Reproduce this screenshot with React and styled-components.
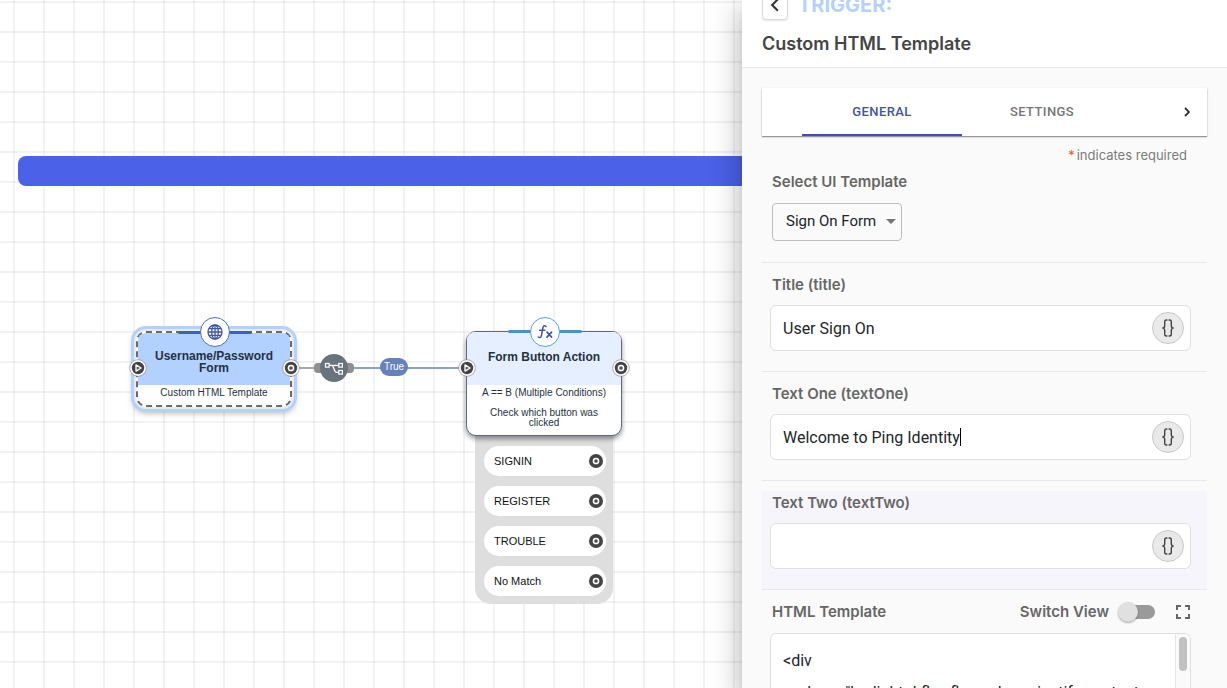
import React from "react";
import styled, { createGlobalStyle, css } from "styled-components";

const GlobalStyle = createGlobalStyle`
  *, *::before, *::after { box-sizing: border-box; }
  html, body { margin: 0; height: 100%; overflow: hidden; }
  body { font-family: Inter, "Liberation Sans", sans-serif; font-size: 15px; color: #212529; background: #fff; }
  button, input, select, textarea { font: inherit; color: inherit; margin: 0; }
  h2, p { margin: 0; }
`;

const Page = styled.div`
  display: flex;
  height: 100vh;
  overflow: hidden;
`;

/* ---------- flow canvas ---------- */

const Canvas = styled.main`
  position: relative;
  flex: 1;
  min-width: 0;
  overflow: hidden;
  background-color: #fff;
  background-image:
    linear-gradient(rgba(0, 0, 0, 0.05) 2px, transparent 2px),
    linear-gradient(90deg, rgba(0, 0, 0, 0.05) 2px, transparent 2px);
  background-size: 30px 30px;
  background-position: 0 1px, 13px 0;
  font-family: "Liberation Sans", Arial, sans-serif;
`;

const Banner = styled.div`
  position: absolute;
  left: 18px;
  right: -20px;
  top: 156px;
  height: 30px;
  border-radius: 8px;
  background: #4a61e8;
`;

const Placed = styled.div`
  position: absolute;
  left: ${(p) => p.$x}px;
  top: ${(p) => p.$y}px;
`;

const Card = styled.article`
  position: relative;
  width: 156px;
  border-radius: 10px;
  background: #fff;
  border: 1px solid #5a6a80;
  color: #253140;
  box-shadow: 0 3px 5px rgba(0, 0, 0, 0.4);
  ${(p) =>
    p.$selected &&
    css`
      border: 2px dashed #6b6b6b;
      box-shadow: 0 0 0 2px #e9eaec, 0 0 0 5px #b3d1ff, 0 3px 6px 3px rgba(0, 0, 0, 0.3);
    `}
`;

const CardHead = styled.header`
  display: flex;
  align-items: center;
  justify-content: center;
  height: ${(p) => (p.$selected ? 52 : 53)}px;
  padding: ${(p) => (p.$selected ? "6px 8px 0" : "0 8px 4px")};
  border-radius: 8px 8px 0 0;
  background: ${(p) => (p.$selected ? "#b3d1ff" : "#e5efff")};
  font-size: 12px;
  line-height: 12px;
  font-weight: 700;
  text-align: center;
`;

const CardBody = styled.div`
  display: flex;
  flex-direction: column;
  gap: 10px;
  padding: 3px 12px 7px;
  font-size: 10px;
  line-height: 10px;
  text-align: center;
`;

const Accent = styled.span`
  position: absolute;
  left: 50%;
  top: -2px;
  width: 74px;
  height: 3px;
  margin-left: -36px;
  border-radius: 2px;
  background: ${(p) => p.$color};
`;

const Badge = styled.span`
  position: absolute;
  left: 50%;
  top: ${(p) => (p.$selected ? -16 : -15)}px;
  width: 30px;
  height: 30px;
  margin-left: -14px;
  display: grid;
  place-items: center;
  border: 1px solid ${(p) => p.$color};
  border-radius: 50%;
  background: #fff;
`;

const Choices = styled.ul`
  display: flex;
  flex-direction: column;
  gap: 10px;
  width: 138px;
  margin: 0;
  padding: 16px 7px 8px 9px;
  list-style: none;
  border-radius: 0 0 16px 16px;
  background: #dedede;
`;

const Choice = styled.li`
  display: flex;
  align-items: center;
  justify-content: space-between;
  height: 30px;
  padding: 0 1px 0 10px;
  border-radius: 15px;
  background: #fff;
  color: #111;
  font-size: 11px;
`;

const EdgeLabel = styled.span`
  display: block;
  width: 28px;
  border-radius: 9px;
  background: #6781bb;
  color: #fff;
  font-size: 10px;
  line-height: 18px;
  text-align: center;
`;

/* ---------- side panel ---------- */

const Panel = styled.aside`
  position: relative;
  z-index: 1;
  display: flex;
  flex-direction: column;
  width: 485px;
  flex: none;
  background: #fafafa;
  box-shadow: 0 8px 10px -5px rgba(0, 0, 0, 0.2), 0 16px 24px 2px rgba(0, 0, 0, 0.14), 0 6px 30px 5px rgba(0, 0, 0, 0.12);
`;

const PanelHead = styled.header`
  display: flex;
  flex-direction: column;
  justify-content: flex-end;
  gap: 12px;
  flex: none;
  height: 68px;
  padding: 0 20px 11px;
  overflow: hidden;
  border-bottom: 1px solid #e8e8e8;
  background: #fff;
`;

const Crumb = styled.div`
  display: flex;
  align-items: center;
  gap: 10px;
  color: #b3d1ff;
  font-size: 20px;
  line-height: 30px;
  font-weight: 700;
`;

const BackButton = styled.button`
  display: grid;
  place-items: center;
  width: 26px;
  height: 30px;
  padding: 0;
  border: 1px solid #d8d8e4;
  border-radius: 4px;
  background: #fff;
  box-shadow: 0 1px 2px rgba(0, 0, 0, 0.1);
`;

const PanelTitle = styled.h2`
  color: #454545;
  font-size: 18px;
  line-height: 24px;
  font-weight: 600;
`;

const PanelBody = styled.div`
  display: flex;
  flex-direction: column;
  flex: 1;
  min-height: 0;
  padding: 20px 20px 0;
  overflow: hidden;
`;

const TabBar = styled.div`
  display: flex;
  flex: none;
  height: 48px;
  padding-left: 40px;
  background: #fff;
  box-shadow: 0 1px 1px rgba(0, 0, 0, 0.35), 0 1px 3px rgba(0, 0, 0, 0.12);
`;

const TabList = styled.div`
  display: flex;
  flex: 1;
  min-width: 0;
  overflow: hidden;
`;

const Tab = styled.button`
  flex: none;
  width: 160px;
  padding: 0;
  border: 0;
  border-bottom: 2px solid ${(p) => (p.$active ? "#3f51b5" : "transparent")};
  background: none;
  color: ${(p) => (p.$active ? "#3f51b5" : "#757575")};
  font-family: Roboto, sans-serif;
  font-size: 13px;
  font-weight: 500;
  letter-spacing: 0.4px;
`;

const IconButton = styled.button`
  display: grid;
  place-items: center;
  width: ${(p) => p.$w || 40}px;
  padding: 0;
  border: 0;
  background: none;
`;

const RequiredNote = styled.p`
  padding: 9px 20px 0 0;
  color: #7c7c7c;
  font-size: 13px;
  line-height: 20px;
  text-align: right;
  span { margin-right: 2px; color: #f4511e; }
`;

const Section = styled.section`
  flex: none;
  display: flex;
  flex-direction: column;
  gap: ${(p) => (p.$first ? 9 : 8)}px;
  margin-top: ${(p) => (p.$first ? 5 : 10)}px;
  padding: 0 16px ${(p) => (p.$first ? 21 : 20)}px 8px;
  border-bottom: 1px solid #e8e8ee;
  background: ${(p) => (p.$tinted ? "#f6f5fb" : "transparent")};
`;

const Label = styled.label`
  padding-left: 2px;
  color: #666;
  font-size: 15px;
  line-height: 24px;
  font-weight: 600;
`;

const SelectBox = styled.div`
  position: relative;
  width: 130px;
  margin-left: 2px;
  svg { position: absolute; right: 6px; top: 16px; pointer-events: none; }
`;

const Select = styled.select`
  appearance: none;
  width: 100%;
  height: 38px;
  padding: 0 20px 2px 13px;
  border: 1px solid #bdbdbd;
  border-radius: 4px;
  background: transparent;
  font-family: Roboto, sans-serif;
`;

const Field = styled.div`
  display: flex;
  align-items: center;
  height: 46px;
  padding: 0 6px 0 12px;
  border: 1px solid #dfdfe4;
  border-radius: 6px;
  background: #fff;
`;

const Input = styled.input`
  field-sizing: content;
  min-width: 10px;
  padding: 0;
  border: 0;
  outline: 0;
  background: none;
  font-family: Roboto, sans-serif;
  font-size: 16px;
`;

const Caret = styled.span`
  width: 1px;
  height: 18px;
  background: #000;
`;

const VariableButton = styled.button`
  display: grid;
  place-items: center;
  width: 32px;
  height: 32px;
  margin-left: auto;
  padding: 0;
  border: 1px solid #cfc6c9;
  border-radius: 50%;
  background: #e9e9e9;
`;

const TemplateSection = styled.section`
  display: flex;
  flex-direction: column;
  flex: 1;
  min-height: 0;
  margin-top: 10px;
  padding: 0 16px 0 8px;
`;

const TemplateHead = styled.div`
  display: flex;
  align-items: center;
  margin-bottom: 9px;
`;

const SwitchLabel = styled(Label)`
  display: flex;
  align-items: center;
  gap: 9px;
  margin-left: auto;
  margin-right: 20px;
`;

const Switch = styled.input`
  appearance: none;
  position: relative;
  width: 37px;
  height: 20px;
  &::before {
    content: "";
    position: absolute;
    inset: 3px 0 3px 3px;
    border-radius: 7px;
    background: #9a9a9a;
  }
  &::after {
    content: "";
    position: absolute;
    left: 0;
    top: 0;
    width: 20px;
    height: 20px;
    border-radius: 50%;
    background: #e0e0e0;
    box-shadow: 0 1px 2px rgba(0, 0, 0, 0.35);
  }
`;

const Editor = styled.div`
  display: flex;
  flex: 1;
  min-height: 0;
  border: 1px solid #dfdfe2;
  border-bottom: 0;
  border-radius: 6px 6px 0 0;
  background: #fff;
  overflow: hidden;
`;

const Code = styled.textarea`
  flex: 1;
  min-width: 0;
  padding: 11px 12px;
  border: 0;
  outline: 0;
  resize: none;
  overflow: hidden;
  background: none;
  font-family: Roboto, sans-serif;
  font-size: 16px;
  line-height: 32px;
  white-space: pre;
`;

const ScrollTrack = styled.div`
  width: 15px;
  padding: 3px 3px 0;
  border-left: 1px solid #e6e6e6;
  background: #fafafa;
`;

const ScrollThumb = styled.div`
  height: 34px;
  width: 8px;
  border-radius: 4px;
  background: #c1c1c1;
`;

/* ---------- drawings ---------- */

function OutPort({ ring }) {
  return (
    <svg width="18" height="18" viewBox="0 0 18 18" aria-hidden="true" display="block">
      {ring && <circle cx="9" cy="9" r="8.3" fill="#fff" stroke="#777" strokeWidth="0.6" />}
      <circle cx="9" cy="9" r={ring ? 6.2 : 7} fill="#444" />
      <circle cx="9" cy="9" r="2.6" fill="#555" stroke="#fff" strokeWidth="1.5" />
    </svg>
  );
}

function InPort() {
  return (
    <svg width="18" height="18" viewBox="0 0 18 18" aria-hidden="true" display="block">
      <circle cx="9" cy="9" r="8.3" fill="#fff" stroke="#777" strokeWidth="0.6" />
      <circle cx="9" cy="9" r="6.2" fill="#444" />
      <path d="M7 5.9v6.2L12.1 9z" fill="#555" stroke="#fff" strokeWidth="1.3" strokeLinejoin="round" />
    </svg>
  );
}

function Globe() {
  return (
    <svg width="16" height="16" viewBox="0 0 16 16" fill="none" stroke="#3f57a6" strokeWidth="1.3" aria-hidden="true">
      <circle cx="8" cy="8" r="7" />
      <ellipse cx="8" cy="8" rx="3.3" ry="7" />
      <path d="M8 1v14M1 8h14M2 4.7h12M2 11.3h12" />
    </svg>
  );
}

function Fx() {
  return (
    <svg width="18" height="18" viewBox="0 0 18 18" fill="none" stroke="#3f57a6" strokeWidth="1.5" strokeLinecap="round" aria-hidden="true">
      <path d="M10 3.6C8.8 2.2 7.3 2.6 7 4.3L5.4 12.6c-.3 1.9-1.8 2.4-3.2 1.4M3.6 7.2h5.2" />
      <path d="M11 9.2l4.6 5M15.6 9.2l-4.6 5" strokeWidth="1.7" />
    </svg>
  );
}

function Connector() {
  return (
    <svg width="170" height="30" viewBox="0 0 170 30" aria-hidden="true" display="block">
      <path d="M0 15h18" stroke="#a8a8a8" strokeWidth="2" />
      <path d="M50 15h111" stroke="#86a1d2" strokeWidth="2" />
      <rect x="16" y="10" width="40" height="10" rx="4" fill="#8f8f8f" />
      <circle cx="36" cy="15" r="14" fill="#69737e" />
      <g fill="none" stroke="#fff" strokeWidth="1.2">
        <rect x="27.5" y="10.5" width="3.6" height="3.6" />
        <rect x="40.8" y="10.5" width="3.6" height="3.6" />
        <rect x="40.8" y="17.5" width="3.6" height="3.6" />
        <path d="M31 12.3h9.8M33.6 12.3c2.8 0 2 7 5 7h2.2" />
      </g>
    </svg>
  );
}

function Chevron({ left, size = 14 }) {
  return (
    <svg width={size} height={size} viewBox="0 0 14 14" fill="none" stroke="#333" strokeWidth="1.8" aria-hidden="true">
      <path d={left ? "M9.5 2 4.5 7l5 5" : "M5 3l4 4-4 4"} />
    </svg>
  );
}

function Braces() {
  return (
    <svg width="14" height="18" viewBox="0 0 14 18" fill="none" stroke="#444" strokeWidth="1.4" aria-hidden="true">
      <path d="M6.4 1H5.5C4.1 1 3.7 1.8 3.7 3v3.4C3.7 8 3.1 9 1.4 9c1.7 0 2.300 1 2.300 2.600V15c0 1.200.4 2 1.800 2h.9M7.600 1h.9c1.400 0 1.800.8 1.800 2v3.400c0 1.600.6 2.600 2.300 2.600-1.700 0-2.300 1-2.300 2.600V15c0 1.200-.4 2-1.800 2h-.9" />
    </svg>
  );
}

function Expand() {
  return (
    <svg width="14" height="14" viewBox="0 0 14 14" fill="none" stroke="#666" strokeWidth="2" aria-hidden="true">
      <path d="M1 5V1h4M9 1h4v4M13 9v4H9M5 13H1V9" />
    </svg>
  );
}

function TextSection({ id, label, value, tinted, caret }) {
  return (
    <Section $tinted={tinted}>
      <Label htmlFor={id}>{label}</Label>
      <Field>
        <Input id={id} type="text" defaultValue={value} />
        {caret && <Caret />}
        <VariableButton type="button" aria-label="Insert variable"><Braces /></VariableButton>
      </Field>
    </Section>
  );
}

const TEMPLATE = `<div
    class="bg-light d-flex flex-column justify-content-
center align-items-center">`;

export default function App() {
  return (
    <>
      <GlobalStyle />
      <Page>
        <Canvas>
          <Banner />
          <Placed $x={298} $y={353}><Connector /></Placed>
          <Placed $x={380} $y={358}><EdgeLabel>True</EdgeLabel></Placed>

          <Placed $x={136} $y={331}>
            <Card $selected>
              <CardHead $selected>Username/Password Form</CardHead>
              <CardBody>
                <p>Custom HTML Template</p>
              </CardBody>
              <Accent $color="#3d62b0" />
              <Badge $selected $color="#4a6cb8"><Globe /></Badge>
            </Card>
          </Placed>
          <Placed $x={129} $y={359}><InPort /></Placed>
          <Placed $x={282} $y={359}><OutPort ring /></Placed>

          <Placed $x={475} $y={430}>
            <Choices>
              {["SIGNIN", "REGISTER", "TROUBLE", "No Match"].map((name) => (
                <Choice key={name}>{name}<OutPort /></Choice>
              ))}
            </Choices>
          </Placed>
          <Placed $x={466} $y={331}>
            <Card>
              <CardHead>Form Button Action</CardHead>
              <CardBody>
                <p>A == B (Multiple Conditions)</p>
                <p>Check which button was clicked</p>
              </CardBody>
              <Accent $color="#4a90cf" />
              <Badge $color="#5a9fd6"><Fx /></Badge>
            </Card>
          </Placed>
          <Placed $x={458} $y={359}><InPort /></Placed>
          <Placed $x={612} $y={359}><OutPort ring /></Placed>
        </Canvas>

        <Panel>
          <PanelHead>
            <Crumb>
              <BackButton type="button" aria-label="Back"><Chevron left size={16} /></BackButton>
              TRIGGER:
            </Crumb>
            <PanelTitle>Custom HTML Template</PanelTitle>
          </PanelHead>
          <PanelBody>
            <TabBar>
              <TabList role="tablist">
                <Tab type="button" role="tab" aria-selected="true" $active>GENERAL</Tab>
                <Tab type="button" role="tab" aria-selected="false">SETTINGS</Tab>
              </TabList>
              <IconButton type="button" aria-label="Next tabs"><Chevron /></IconButton>
            </TabBar>
            <RequiredNote><span>*</span>indicates required</RequiredNote>

            <Section $first>
              <Label htmlFor="ui-template">Select UI Template</Label>
              <SelectBox>
                <Select id="ui-template" defaultValue="Sign On Form">
                  <option>Sign On Form</option>
                </Select>
                <svg width="10" height="5" viewBox="0 0 10 5" aria-hidden="true"><path d="M0 0h10L5 5z" fill="#757575" /></svg>
              </SelectBox>
            </Section>
            <TextSection id="title" label="Title (title)" value="User Sign On" />
            <TextSection id="text-one" label="Text One (textOne)" value="Welcome to Ping Identity" caret />
            <TextSection id="text-two" label="Text Two (textTwo)" value="" tinted />

            <TemplateSection>
              <TemplateHead>
                <Label htmlFor="html-template">HTML Template</Label>
                <SwitchLabel>
                  Switch View
                  <Switch type="checkbox" role="switch" />
                </SwitchLabel>
                <IconButton type="button" aria-label="Full screen" $w={16}><Expand /></IconButton>
              </TemplateHead>
              <Editor>
                <Code id="html-template" defaultValue={TEMPLATE} />
                <ScrollTrack><ScrollThumb /></ScrollTrack>
              </Editor>
            </TemplateSection>
          </PanelBody>
        </Panel>
      </Page>
    </>
  );
}
